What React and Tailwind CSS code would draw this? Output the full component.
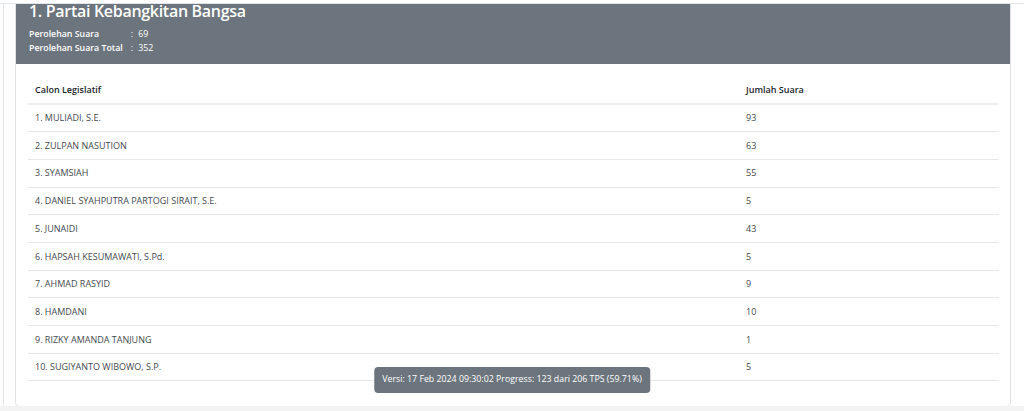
const CALEG = [
  { nama: '1. MULIADI, S.E.', suara: 93 },
  { nama: '2. ZULPAN NASUTION', suara: 63 },
  { nama: '3. SYAMSIAH', suara: 55 },
  { nama: '4. DANIEL SYAHPUTRA PARTOGI SIRAIT, S.E.', suara: 5 },
  { nama: '5. JUNAIDI', suara: 43 },
  { nama: '6. HAPSAH KESUMAWATI, S.Pd.', suara: 5 },
  { nama: '7. AHMAD RASYID', suara: 9 },
  { nama: '8. HAMDANI', suara: 10 },
  { nama: '9. RIZKY AMANDA TANJUNG', suara: 1 },
  { nama: '10. SUGIYANTO WIBOWO, S.P.', suara: 5 },
];

export default function App() {
  return (
    <div className="relative h-[411px] overflow-hidden bg-white font-['Open_Sans',sans-serif] text-[#212529]">
      {/* bagian atas halaman yang sudah ter-scroll */}
      <div className="absolute inset-x-0 top-0 z-10 h-[4px] bg-white border-b border-[#e3e6ea]" />

      <div className="h-full border-l border-[#e3e6ea] ml-[3px] pl-[11px] pr-[13px]">
        <div className="border border-[#dee2e6] rounded-b-[5px] pb-[25px]">
          {/* header partai */}
          <div className="bg-[#6c757d] text-white pl-[13px] pb-[9px]">
            <h4 className="text-[16px] leading-[20px] font-semibold tracking-[-0.3px]">1. Partai Kebangkitan Bangsa</h4>
            <table className="mt-[6px] text-[8.8px] leading-[14px]">
              <tbody>
                <tr>
                  <td className="font-semibold pr-[8px]">Perolehan Suara</td>
                  <td className="pr-[5px]">:</td>
                  <td>69</td>
                </tr>
                <tr>
                  <td className="font-semibold pr-[8px]">Perolehan Suara Total</td>
                  <td className="pr-[5px]">:</td>
                  <td>352</td>
                </tr>
              </tbody>
            </table>
          </div>

          {/* tabel caleg */}
          <div className="pl-[12px] pr-[11px] pt-[12px]">
            <table className="w-full text-[9px] border-collapse">
              <thead>
                <tr className="h-[28px] border-b-2 border-[#edf0f2]">
                  <th className="text-left font-semibold pl-[7px] text-[#212529]">Calon Legislatif</th>
                  <th className="text-left font-semibold pl-[7px] w-[260px] text-[#212529]">Jumlah Suara</th>
                </tr>
              </thead>
              <tbody className="text-[#44494e]">
                {CALEG.map((c) => (
                  <tr key={c.nama} className="h-[27.7px] border-b border-[#e6e8eb]">
                    <td className="pl-[7px]">{c.nama}</td>
                    <td className="pl-[7px]">{c.suara}</td>
                  </tr>
                ))}
              </tbody>
            </table>
          </div>
        </div>
      </div>

      <div className="absolute inset-x-0 bottom-0 h-[5px] bg-[#f3f3f3]" />

      {/* info versi */}
      <div className="absolute left-1/2 -translate-x-1/2 bottom-[18px] z-20 bg-[#6c757d] text-white rounded-[4px] h-[26px] px-[8px] flex items-center text-[8.8px] whitespace-nowrap">
        Versi: 17 Feb 2024 09:30:02 Progress: 123 dari 206 TPS (59.71%)
      </div>
    </div>
  );
}
